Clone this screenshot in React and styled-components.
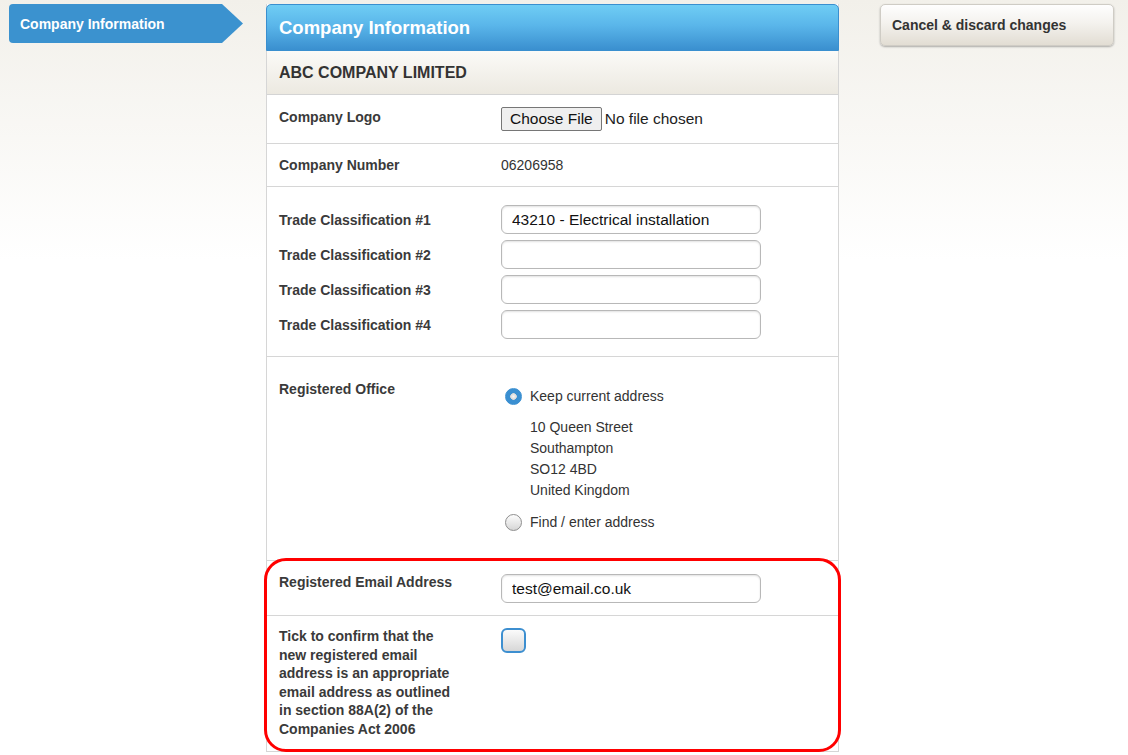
import React from "react";
import styled, { createGlobalStyle } from "styled-components";

const GlobalStyle = createGlobalStyle`
  html, body {
    margin: 0;
    padding: 0;
  }
  body {
    font-family: "Liberation Sans", Arial, sans-serif;
    color: #333;
    background: #fff linear-gradient(#f2f0ea, #fff 260px) no-repeat;
    min-height: 755px;
  }
`;

const trades = ["43210 - Electrical installation", "", "", ""];
const address = ["10 Queen Street", "Southampton", "SO12 4BD", "United Kingdom"];

export default function App() {
  return (
    <>
      <GlobalStyle />
      <Page>
        <NavTab>Company Information</NavTab>

        <Panel>
          <PanelHeader>Company Information</PanelHeader>
          <SubHeader>ABC COMPANY LIMITED</SubHeader>

          <Row pad="12px 12px">
            <Label offset="1px">Company Logo</Label>
            <FileField>
              <FileButton type="button">Choose File</FileButton>
              <FileName>No file chosen</FileName>
            </FileField>
          </Row>

          <Row pad="12px 12px">
            <Label>Company Number</Label>
            <Value>06206958</Value>
          </Row>

          <Row pad="18px 12px 17px">
            <TradeGrid>
              {trades.map((t, i) => (
                <React.Fragment key={i}>
                  <Label>Trade Classification #{i + 1}</Label>
                  <TextInput defaultValue={t} />
                </React.Fragment>
              ))}
            </TradeGrid>
          </Row>

          <Row pad="23px 12px 29px">
            <Label>Registered Office</Label>
            <Options>
              <RadioLine>
                <Radio type="radio" name="office" defaultChecked />
                <span>Keep current address</span>
              </RadioLine>
              <Address>
                {address.map((l) => (
                  <div key={l}>{l}</div>
                ))}
              </Address>
              <RadioLine>
                <Radio type="radio" name="office" />
                <span>Find / enter address</span>
              </RadioLine>
            </Options>
          </Row>

          <Highlight>
            <Row pad="12px 12px">
              <Label>Registered Email Address</Label>
              <TextInput defaultValue="test@email.co.uk" style={{ marginTop: 1 }} />
            </Row>
            <Row pad="11px 12px 12px">
              <Label wrap="true">
                Tick to confirm that the new registered email address is an
                appropriate email address as outlined in section 88A(2) of the
                Companies Act 2006
              </Label>
              <Check type="checkbox" />
            </Row>
          </Highlight>
        </Panel>

        <CancelButton type="button">Cancel &amp; discard changes</CancelButton>
      </Page>
    </>
  );
}

const Page = styled.div`
  display: flex;
  align-items: flex-start;
  padding: 4px 0 0 9px;
`;

const NavTab = styled.div`
  width: 234px;
  height: 39px;
  box-sizing: border-box;
  padding: 0 0 0 11px;
  display: flex;
  align-items: center;
  background: #3b92cf;
  color: #fff;
  font-weight: bold;
  font-size: 14px;
  border-radius: 4px 0 0 4px;
  clip-path: polygon(0 0, calc(100% - 21px) 0, 100% 50%, calc(100% - 21px) 100%, 0 100%);
  margin-right: 23px;
`;

const Panel = styled.div`
  width: 573px;
  box-sizing: border-box;
  background: #fff;
  border-left: 1px solid #d6d6d6;
  border-right: 1px solid #d6d6d6;
  margin-right: 41px;
`;

const PanelHeader = styled.div`
  height: 47px;
  box-sizing: border-box;
  margin: 0 -1px;
  padding: 0 12px;
  display: flex;
  align-items: center;
  background: linear-gradient(#6fcdf4, #5ab6ea 45%, #3a8fcf);
  border: 1px solid #3a8fcf;
  border-radius: 5px 5px 0 0;
  color: #fff;
  font-size: 18.5px;
  font-weight: bold;
`;

const SubHeader = styled.div`
  height: 44px;
  box-sizing: border-box;
  padding: 0 12px;
  display: flex;
  align-items: center;
  background: linear-gradient(#fbfaf7, #ece9e1);
  border-bottom: 1px solid #d4d4d4;
  font-size: 16px;
  font-weight: bold;
  color: #333;
`;

const Row = styled.div`
  display: grid;
  grid-template-columns: 222px 1fr;
  align-items: start;
  padding: ${(p) => p.pad};
  border-bottom: 1px solid #d6d6d6;
`;

const Label = styled.div`
  font-size: 14px;
  font-weight: bold;
  color: #3a3a3a;
  margin-top: ${(p) => p.offset || 0};
  line-height: ${(p) => (p.wrap ? "18.6px" : "18px")};
  max-width: ${(p) => (p.wrap ? "180px" : "none")};
`;

const Value = styled.div`
  font-size: 14px;
  line-height: 18px;
  color: #333;
`;

const FileField = styled.div`
  display: flex;
  align-items: center;
  height: 24px;
  font-size: 15.5px;
`;

const FileButton = styled.button`
  height: 24px;
  padding: 0 8px;
  margin: 0 3px 0 0;
  font-family: "Liberation Sans", Arial, sans-serif;
  font-size: 15.5px;
  color: #111;
  background: #efefef;
  border: 1px solid #767676;
  border-radius: 2px;
`;

const FileName = styled.span`
  color: #222;
`;

const TradeGrid = styled.div`
  grid-column: 1 / -1;
  display: grid;
  grid-template-columns: 222px 1fr;
  align-items: center;
  row-gap: 6px;
`;

const TextInput = styled.input`
  width: 260px;
  height: 29px;
  box-sizing: border-box;
  padding: 0 10px;
  margin: 0;
  font-family: "Liberation Sans", Arial, sans-serif;
  font-size: 15.5px;
  color: #111;
  background: #fff;
  border: 1px solid #b8b8b8;
  border-radius: 6px;
  box-shadow: inset 0 1px 2px rgba(0, 0, 0, 0.12);
  outline: none;
`;

const Options = styled.div`
  padding-top: 7px;
  font-size: 14px;
  color: #333;
`;

const RadioLine = styled.label`
  display: flex;
  align-items: center;
  gap: 8px;
  height: 18px;
  padding-left: 4px;
`;

const Radio = styled.input`
  appearance: none;
  width: 17px;
  height: 17px;
  margin: 0;
  border-radius: 50%;
  border: 1px solid #8e8e8e;
  background: linear-gradient(#fdfdfd, #d6d6d6);
  box-sizing: border-box;

  &:checked {
    border-color: #3a8fd1;
    background: radial-gradient(circle, #f7f7f7 0, #d8d8d8 3px, #3a8fd1 3.6px);
  }
`;

const Address = styled.div`
  margin: 12px 0 12px 29px;
  line-height: 21px;
`;

const Check = styled.input`
  appearance: none;
  width: 25px;
  height: 25px;
  margin: 1px 0 0;
  box-sizing: border-box;
  border: 2px solid #3d8fd0;
  border-radius: 6px;
  background: linear-gradient(#fbfbfb, #d7d7d7);
`;

const Highlight = styled.div`
  position: relative;

  &::after {
    content: "";
    position: absolute;
    top: -3px;
    left: -3px;
    right: -3px;
    bottom: 0;
    border: 3px solid #ff0000;
    border-radius: 22px;
    pointer-events: none;
  }
`;

const CancelButton = styled.button`
  width: 234px;
  height: 42px;
  padding: 0 11px;
  text-align: left;
  font-family: "Liberation Sans", Arial, sans-serif;
  font-size: 14px;
  font-weight: bold;
  color: #333;
  background: linear-gradient(#fefefe, #f4f2ee 45%, #e2ddd3);
  border: 1px solid #cfccc5;
  border-radius: 5px;
  box-shadow: 0 1px 2px rgba(0, 0, 0, 0.3);
`;
